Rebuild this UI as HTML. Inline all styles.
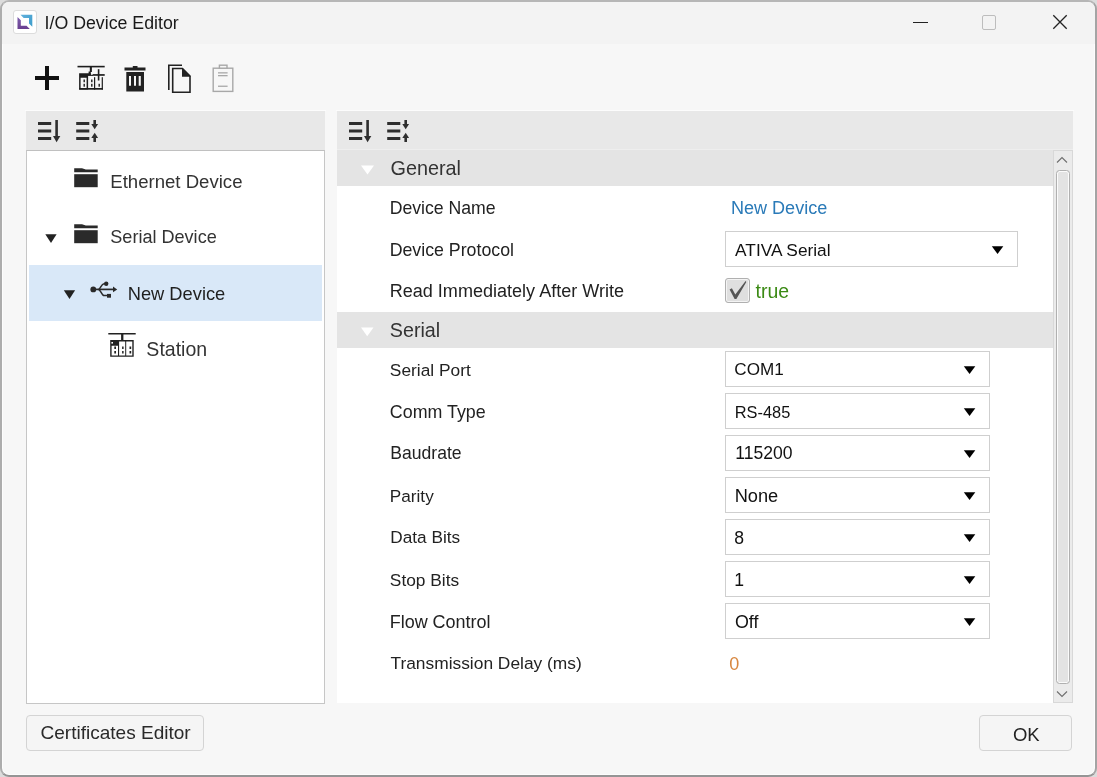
<!DOCTYPE html>
<html><head><meta charset="utf-8">
<style>
*{margin:0;padding:0;box-sizing:border-box}
html,body{width:1097px;height:777px;overflow:hidden;background:#dcdcdc;font-family:"Liberation Sans",sans-serif}
#win{position:absolute;left:0;top:0;width:1097px;height:777px;border:2px solid #adadad;border-top-color:#b6b6b6;border-right-color:#a4a4a4;border-bottom-color:#959595;border-radius:9px;background:#f7f7f7;overflow:hidden;box-shadow:inset 0 0 0 1px #fdfdfd}
#title{position:absolute;left:0;top:0;width:1093px;height:42px;background:#f3f3f3}
.a{position:absolute}
.t{position:absolute;line-height:20px;height:20px;white-space:nowrap}
.hdr{position:absolute;background:#e8e8e8}
.combo{position:absolute;border:1px solid #cfcfcf;background:#fff}
.combo .arr{position:absolute;right:14px;top:14px;width:0;height:0;border-left:5.5px solid transparent;border-right:5.5px solid transparent;border-top:8px solid #111}
.btn{position:absolute;border:1px solid #d4d4d4;border-radius:4px;background:#f5f5f5}
</style></head><body>
<div id="win"><div id="title"></div></div>
<div class="a" style="left:0;top:0;width:1097px;height:777px">
  <!-- app icon -->
  <div class="a" style="left:13px;top:10px;width:24px;height:24px;border:1px solid #dcdcdc;border-radius:3px;background:#fff"></div>
  <svg class="a" style="left:0;top:0" width="40" height="40" viewBox="0 0 40 40">
    <defs>
      <linearGradient id="gp" x1="0" y1="0" x2="0" y2="1"><stop offset="0" stop-color="#7d5fae"/><stop offset="1" stop-color="#6a3f90"/></linearGradient>
      <linearGradient id="gb" x1="0" y1="0" x2="1" y2="1"><stop offset="0" stop-color="#62b0dc"/><stop offset="1" stop-color="#3a9cca"/></linearGradient>
    </defs>
    <path d="M17.5 17 L20.8 20.3 L20.8 25.7 L26.5 25.7 L29.8 29 L17.5 29 Z" fill="url(#gp)"/>
    <path d="M20.5 14.8 L32.3 14.8 L32.3 26.8 L29 23.5 L29 18 L23.7 18 Z" fill="url(#gb)"/>
  </svg>
  <!-- window controls -->
  <div class="a" style="left:913px;top:22px;width:15px;height:1.2px;background:#222"></div>
  <div class="a" style="left:982px;top:15px;width:14px;height:15px;border:1px solid #bdbdbd;border-radius:2px"></div>
  <svg class="a" style="left:1052px;top:14px" width="16" height="16" viewBox="0 0 16 16"><path d="M1.3 1.3 L14.7 14.7 M14.7 1.3 L1.3 14.7" stroke="#222" stroke-width="1.3"/></svg>

  <!-- toolbar -->
  <svg class="a" style="left:30px;top:60px" width="215" height="36" viewBox="30 60 215 36">
    <rect x="35" y="76" width="24" height="4" fill="#111"/>
    <rect x="45" y="66" width="4" height="24" fill="#111"/>
    <g fill="#1e1e1e">
      <rect x="77.5" y="65.8" width="27.2" height="1.6"/>
      <rect x="89.8" y="66.5" width="2.1" height="5.5"/>
      <rect x="88.6" y="71.5" width="2.2" height="3.6"/>
      <path fill-rule="evenodd" d="M79.1 73.3 H90.8 V75.2 H88.1 V89.6 H79.1 Z M80.6 77.8 V88.1 H86.6 V77.8 Z"/>
      <rect x="88" y="74.8" width="5" height="1.1"/>
      <rect x="94" y="77.2" width="1.2" height="12.4"/>
      <rect x="101.7" y="77.2" width="1.2" height="12.4"/>
      <rect x="79.1" y="88" width="23.8" height="1.7"/>
      <rect x="97.8" y="69.2" width="1.6" height="11.3"/>
      <rect x="92.7" y="74.1" width="12" height="1.7"/>
      <rect x="83.5" y="79.5" width="1.4" height="2.7"/><rect x="83.5" y="83.8" width="1.4" height="2.9"/>
      <rect x="91.1" y="79.5" width="1.4" height="2.7"/><rect x="91.1" y="83.8" width="1.4" height="2.9"/>
      <rect x="98.5" y="83.8" width="1.4" height="2.9"/>
    </g>
    <g fill="#222">
      <rect x="124.5" y="67.5" width="21" height="3"/>
      <rect x="132.8" y="66" width="4.7" height="2"/>
      <path d="M126.3 72 H144 V91.4 H126.3 Z M129 76 V85.7 H131 V76 Z M134 76 V85.7 H136 V76 Z M138.7 76 V85.7 H140.8 V76 Z" fill-rule="evenodd"/>
    </g>
    <g fill="none" stroke="#222" stroke-width="1.6">
      <path d="M168.8 90 V65.3 H182"/>
      <path d="M172.7 68.5 H182.5 L190 76 V92.2 H172.7 Z"/>
    </g>
    <path d="M182 68 L190.8 76.8 L182 76.8 Z" fill="#222"/>
    <g stroke="#a8a8a8" stroke-width="1.4">
      <rect x="213.2" y="68.2" width="19.6" height="23.2" fill="none"/>
      <rect x="219.4" y="65.2" width="7.6" height="3" fill="#f7f7f7"/>
    </g>
    <g fill="#a8a8a8">
      <rect x="218" y="72.2" width="9.6" height="1.3"/>
      <rect x="218" y="75" width="9.6" height="1.3"/>
      <rect x="218" y="85.6" width="9.6" height="1.3"/>
    </g>
  </svg>

  <!-- left panel -->
  <div class="a" style="left:25px;top:110px;width:301px;height:1px;background:#fcfcfc"></div>
  <div class="a" style="left:336px;top:110px;width:738px;height:1px;background:#fcfcfc"></div>
  <div class="hdr" style="left:26px;top:111px;width:299px;height:40px"></div>
  <div class="a" style="left:26px;top:150px;width:299px;height:554px;border:1px solid #c6c6c6;border-top-color:#c0c0c0;background:#fff"></div>
  <div class="a" style="left:29px;top:265px;width:293px;height:56px;background:#d9e8f8"></div>

  <!-- right panel -->
  <div class="hdr" style="left:337px;top:111px;width:736px;height:39px"></div>
  <div class="a" style="left:337px;top:149px;width:736px;height:1px;background:#eeeeee"></div>
  <div class="a" style="left:337px;top:150px;width:716px;height:553px;background:#fff"></div>
  <div class="a" style="left:337px;top:150px;width:716px;height:36px;background:#e4e4e4"></div>
  <div class="a" style="left:337px;top:312px;width:716px;height:36px;background:#e4e4e4"></div>
  <!-- scrollbar -->
  <div class="a" style="left:1053px;top:150px;width:20px;height:553px;background:#ebebeb;border:1px solid #d8d8d8"></div>
  <div class="a" style="left:1056px;top:170px;width:14px;height:514px;border:1px solid #b0b0b0;border-radius:3.5px;background:#e3e3e3;box-shadow:inset 0 0 0 1px #fbfbfb"></div>

  <svg class="a" style="left:0;top:0" width="1097" height="777" viewBox="0 0 1097 777">
    <g transform="translate(0,0)" fill="#2e2e2e">
      <rect x="38" y="122" width="13.2" height="3"/>
      <rect x="38" y="129.5" width="13.2" height="3"/>
      <rect x="38" y="137" width="13.2" height="3"/>
      <rect x="55.3" y="120" width="2.6" height="17"/>
      <path d="M53 136 H60.3 L56.6 142.2 Z"/>
      <rect x="76.2" y="122" width="13.1" height="3"/>
      <rect x="76.2" y="129.5" width="13.1" height="3"/>
      <rect x="76.2" y="137" width="13.1" height="3"/>
      <rect x="93.4" y="120" width="2.6" height="4.5"/>
      <path d="M91.3 124 H98.1 L94.7 129.3 Z"/>
      <rect x="93.4" y="137.5" width="2.6" height="4.5"/>
      <path d="M91.3 138 H98.1 L94.7 132.8 Z"/>
    </g>
    <g transform="translate(311,0)" fill="#2e2e2e">
      <rect x="38" y="122" width="13.2" height="3"/>
      <rect x="38" y="129.5" width="13.2" height="3"/>
      <rect x="38" y="137" width="13.2" height="3"/>
      <rect x="55.3" y="120" width="2.6" height="17"/>
      <path d="M53 136 H60.3 L56.6 142.2 Z"/>
      <rect x="76.2" y="122" width="13.1" height="3"/>
      <rect x="76.2" y="129.5" width="13.1" height="3"/>
      <rect x="76.2" y="137" width="13.1" height="3"/>
      <rect x="93.4" y="120" width="2.6" height="4.5"/>
      <path d="M91.3 124 H98.1 L94.7 129.3 Z"/>
      <rect x="93.4" y="137.5" width="2.6" height="4.5"/>
      <path d="M91.3 138 H98.1 L94.7 132.8 Z"/>
    </g>
    <!-- scroll arrows -->
    <path d="M1057 162.5 L1062 157.5 L1067 162.5" fill="none" stroke="#6e6e6e" stroke-width="1.1"/>
    <path d="M1057 691.5 L1062 696.5 L1067 691.5" fill="none" stroke="#6e6e6e" stroke-width="1.1"/>
    <!-- section triangles (white) -->
    <path d="M361 165.5 H374 L367.5 174.5 Z" fill="#fff"/>
    <path d="M361 327.5 H373.5 L367.2 336.3 Z" fill="#fff"/>
    <!-- folders -->
    <g fill="#2a2a2a">
      <path d="M74.2 168.2 H82 L85.8 169.6 H97.7 V172.2 H74.2 Z"/>
      <rect x="74.2" y="174.2" width="23.5" height="13"/>
      <path d="M74.2 224.2 H82 L85.8 225.6 H97.7 V228.2 H74.2 Z"/>
      <rect x="74.2" y="230.2" width="23.5" height="13"/>
    </g>
    <!-- tree expand triangles -->
    <path d="M45.3 234.3 H56.6 L51 243 Z" fill="#222"/>
    <path d="M63.8 290.3 H75.1 L69.5 299 Z" fill="#222"/>
    <!-- usb -->
    <g fill="#2a2a2a" stroke="#2a2a2a">
      <circle cx="93.3" cy="289.4" r="2.9" stroke="none"/>
      <path d="M93 289.4 H114" fill="none" stroke-width="1.7"/>
      <path d="M113 286.6 L117.2 289.4 L113 292.2 Z" stroke="none"/>
      <path d="M98.5 289.4 C100.5 289.4 101.2 283.8 104 283.8 H105" fill="none" stroke-width="1.5"/>
      <circle cx="106.2" cy="283.8" r="2.2" stroke="none"/>
      <path d="M98.5 289.4 C100.5 289.4 101.8 295.6 104 295.6 H108" fill="none" stroke-width="1.5"/>
      <rect x="107" y="293.9" width="4" height="3.8" stroke="none"/>
    </g>
    <!-- station tree icon -->
    <g fill="#222">
      <rect x="108.3" y="333" width="27.4" height="1.5"/>
      <rect x="121.1" y="334" width="2.3" height="6.5"/>
      <path d="M110.2 340.1 H133.7 V356.8 H110.2 Z M111.6 345.7 V355.4 H118 V345.7 Z M119.1 341.6 V355.4 H125.2 V341.6 Z M126.2 341.6 V355.4 H132.3 V341.6 Z" fill-rule="evenodd"/>
      <rect x="111.4" y="342" width="1.6" height="1.6" fill="#fff"/>
      <rect x="114.3" y="346.5" width="1.7" height="2.5"/><rect x="114.3" y="351" width="1.7" height="2.5"/>
      <rect x="122.1" y="346.5" width="1.5" height="2.5"/><rect x="122.1" y="351" width="1.5" height="2.5"/>
      <rect x="129.5" y="346.5" width="1.7" height="2.5"/><rect x="129.5" y="351" width="1.7" height="2.5"/>
    </g>
  </svg>

  <div class="combo" style="left:725px;top:231px;width:293px;height:36px"></div><div class="combo" style="left:725px;top:351px;width:265px;height:36px"></div><div class="combo" style="left:725px;top:393px;width:265px;height:36px"></div><div class="combo" style="left:725px;top:435px;width:265px;height:36px"></div><div class="combo" style="left:725px;top:477px;width:265px;height:36px"></div><div class="combo" style="left:725px;top:519px;width:265px;height:36px"></div><div class="combo" style="left:725px;top:561px;width:265px;height:36px"></div><div class="combo" style="left:725px;top:603px;width:265px;height:36px"></div>
  <svg class="a" style="left:0;top:0" width="1097" height="777" viewBox="0 0 1097 777"><g fill="#000"><path d="M991.8 246.2 H1003.3 L997.55 254.0 Z"/><path d="M963.8 366.2 H975.3 L969.55 374.0 Z"/><path d="M963.8 408.2 H975.3 L969.55 416.0 Z"/><path d="M963.8 450.2 H975.3 L969.55 458.0 Z"/><path d="M963.8 492.2 H975.3 L969.55 500.0 Z"/><path d="M963.8 534.2 H975.3 L969.55 542.0 Z"/><path d="M963.8 576.2 H975.3 L969.55 584.0 Z"/><path d="M963.8 618.2 H975.3 L969.55 626.0 Z"/></g></svg>
  <!-- checkbox -->
  <div class="a" style="left:725px;top:278px;width:25px;height:25px;border:1px solid #b0b0b0;border-radius:3px;background:#dfdfdf;box-shadow:inset 0 0 0 1px #f4f4f4"></div>
  <svg class="a" style="left:0;top:0" width="800" height="320" viewBox="0 0 800 320"><path d="M729.6 289.4 L731.9 288.2 L735.3 294.4 L745.6 281.1 L746.3 282.0 L736.4 299.0 L734.6 299.0 Z" fill="#555"/></svg>

  <!-- bottom buttons -->
  <div class="btn" style="left:26px;top:715px;width:178px;height:36px"></div>
  <div class="btn" style="left:979px;top:715px;width:93px;height:36px"></div>

  <div class="a" style="left:0;top:0;width:1097px;height:777px;will-change:transform"><div class="t" style="left:44.62px;top:13.00px;font-size:17.74px;color:#1a1a1a">I/O Device Editor</div><div class="t" style="left:110.30px;top:171.71px;font-size:18.58px;color:#333">Ethernet Device</div><div class="t" style="left:110.30px;top:227.21px;font-size:18.07px;color:#333">Serial Device</div><div class="t" style="left:127.68px;top:283.81px;font-size:18.31px;color:#1f1f1f">New Device</div><div class="t" style="left:146.36px;top:338.81px;font-size:19.53px;color:#333">Station</div><div class="t" style="left:390.48px;top:157.91px;font-size:19.82px;color:#333">General</div><div class="t" style="left:389.86px;top:319.60px;font-size:19.69px;color:#333">Serial</div><div class="t" style="left:389.68px;top:198.00px;font-size:17.66px;color:#222">Device Name</div><div class="t" style="left:389.68px;top:239.50px;font-size:17.76px;color:#222">Device Protocol</div><div class="t" style="left:389.68px;top:281.00px;font-size:18.06px;color:#222">Read Immediately After Write</div><div class="t" style="left:389.86px;top:359.81px;font-size:17.33px;color:#222">Serial Port</div><div class="t" style="left:389.86px;top:401.50px;font-size:17.84px;color:#222">Comm Type</div><div class="t" style="left:390.36px;top:443.21px;font-size:17.56px;color:#222">Baudrate</div><div class="t" style="left:389.86px;top:485.60px;font-size:17.16px;color:#222">Parity</div><div class="t" style="left:390.36px;top:527.31px;font-size:17.21px;color:#222">Data Bits</div><div class="t" style="left:389.86px;top:569.81px;font-size:17.32px;color:#222">Stop Bits</div><div class="t" style="left:389.68px;top:611.60px;font-size:17.98px;color:#222">Flow Control</div><div class="t" style="left:390.48px;top:653.10px;font-size:17.38px;color:#222">Transmission Delay (ms)</div><div class="t" style="left:730.98px;top:198.00px;font-size:18.06px;color:#2a7ab8">New Device</div><div class="t" style="left:735.10px;top:239.60px;font-size:17.31px;color:#111">ATIVA Serial</div><div class="t" style="left:755.60px;top:281.31px;font-size:19.47px;color:#3b8a14">true</div><div class="t" style="left:734.30px;top:359.81px;font-size:17.10px;color:#111">COM1</div><div class="t" style="left:734.80px;top:401.50px;font-size:16.36px;color:#111">RS-485</div><div class="t" style="left:735.24px;top:443.21px;font-size:17.56px;color:#111">115200</div><div class="t" style="left:734.68px;top:486.00px;font-size:18.23px;color:#111">None</div><div class="t" style="left:734.26px;top:527.60px;font-size:17.60px;color:#111">8</div><div class="t" style="left:734.22px;top:569.81px;font-size:17.60px;color:#111">1</div><div class="t" style="left:734.98px;top:611.50px;font-size:17.86px;color:#111">Off</div><div class="t" style="left:729.32px;top:653.71px;font-size:18.00px;color:#d8873f">0</div><div class="t" style="left:40.48px;top:723.10px;font-size:19.04px;color:#2a2a2a">Certificates Editor</div><div class="t" style="left:1012.96px;top:724.60px;font-size:18.50px;color:#222">OK</div></div>
</div>
</body></html>
